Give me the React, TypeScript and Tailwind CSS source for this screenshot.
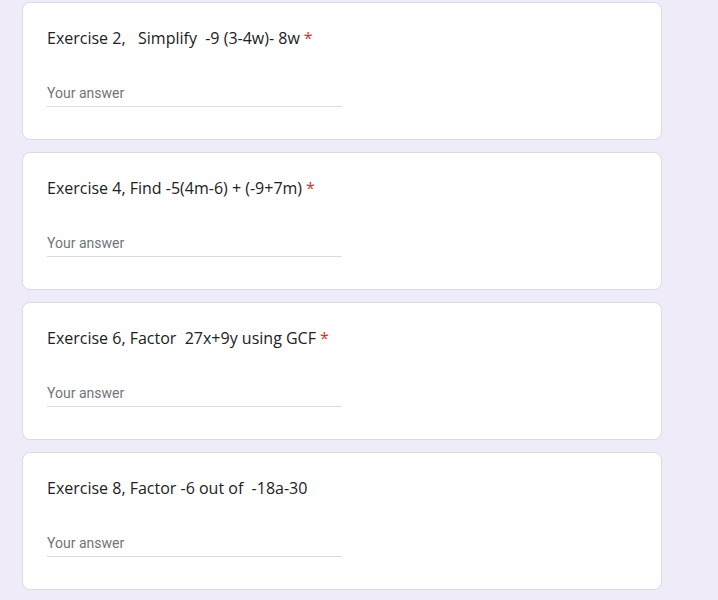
const questions = [
  { title: "Exercise 2,   Simplify  -9 (3-4w)- 8w", required: true },
  { title: "Exercise 4, Find -5(4m-6) + (-9+7m)", required: true },
  { title: "Exercise 6, Factor  27x+9y using GCF", required: true },
  { title: "Exercise 8, Factor -6 out of  -18a-30", required: false },
];

const QuestionCard = ({ title, required }: { title: string; required: boolean }) => (
  <div className="w-[640px] rounded-lg border border-[#dadce0] bg-white px-6 pt-[23px] pb-[32px]">
    <div
      className="h-6 whitespace-pre-wrap text-base leading-6 text-[#202124]"
      style={{ fontFamily: '"Open Sans", sans-serif' }}
    >
      {title}
      {required && <span className="ml-1 text-[#d93025]">*</span>}
    </div>
    <div className="mt-[30px] w-1/2">
      <input
        type="text"
        placeholder="Your answer"
        className="h-[27px] w-full border-b border-[#dadce0] bg-transparent text-sm text-[#202124] outline-none placeholder:text-[#70757a]"
        style={{ fontFamily: "Roboto, sans-serif" }}
      />
    </div>
  </div>
);

export default function App() {
  return (
    <div className="min-h-[600px] bg-[#f0ebf8] pl-[22px] pt-[2px]">
      <div className="flex flex-col gap-3">
        {questions.map((q) => (
          <QuestionCard key={q.title} title={q.title} required={q.required} />
        ))}
      </div>
    </div>
  );
}
